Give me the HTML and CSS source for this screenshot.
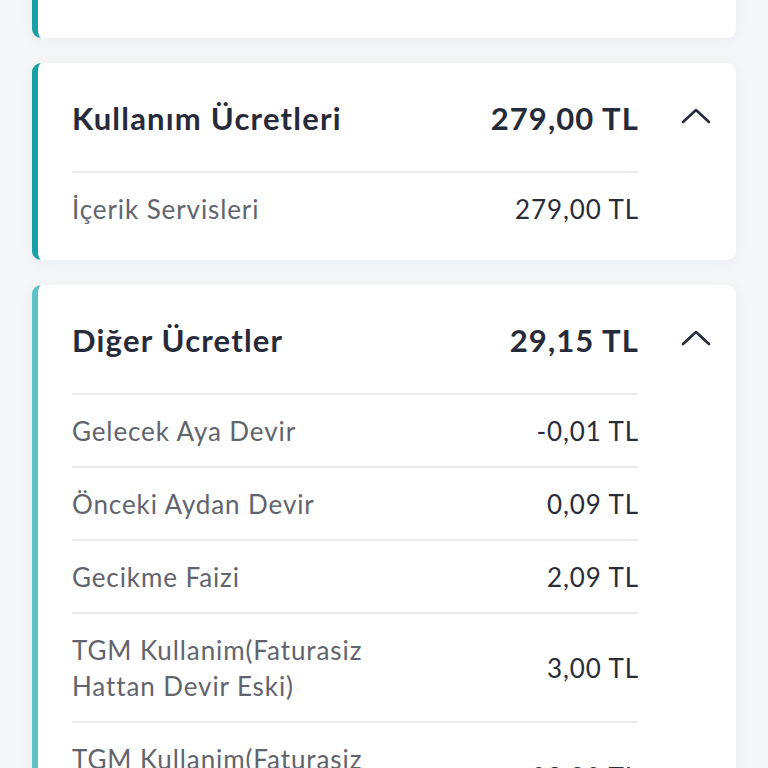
FILE: index.html
```html
<!DOCTYPE html>
<html lang="tr">
<head>
<meta charset="utf-8">
<title>Fatura Detayı</title>
<link rel="stylesheet" href="styles.css">
</head>
<body>
<main class="list">
  <section class="card card-dark card-first">
    <div class="card-head">
      <h2 class="title">Fatura Özeti</h2>
      <span class="total">308,15 TL</span>
      <span class="chev"><svg viewBox="0 0 30 16" width="30" height="16"><path d="M2 14 L15 2 L28 14" fill="none" stroke="#272a38" stroke-width="2.6" stroke-linecap="round" stroke-linejoin="round"/></svg></span>
    </div>
    <div class="rows">
      <div class="row"><span class="label">Bu Ayki Tutar</span><span class="amount">308,15 TL</span></div>
    </div>
  </section>

  <section class="card card-dark">
    <div class="card-head">
      <h2 class="title">Kullanım Ücretleri</h2>
      <span class="total">279,00 TL</span>
      <span class="chev"><svg viewBox="0 0 30 16" width="30" height="16"><path d="M2 14 L15 2 L28 14" fill="none" stroke="#272a38" stroke-width="2.6" stroke-linecap="round" stroke-linejoin="round"/></svg></span>
    </div>
    <div class="rows">
      <div class="row"><span class="label">İçerik Servisleri</span><span class="amount">279,00 TL</span></div>
    </div>
  </section>

  <section class="card card-light">
    <div class="card-head">
      <h2 class="title">Diğer Ücretler</h2>
      <span class="total">29,15 TL</span>
      <span class="chev"><svg viewBox="0 0 30 16" width="30" height="16"><path d="M2 14 L15 2 L28 14" fill="none" stroke="#272a38" stroke-width="2.6" stroke-linecap="round" stroke-linejoin="round"/></svg></span>
    </div>
    <div class="rows">
      <div class="row"><span class="label">Gelecek Aya Devir</span><span class="amount">-0,01 TL</span></div>
      <div class="row"><span class="label">Önceki Aydan Devir</span><span class="amount">0,09 TL</span></div>
      <div class="row"><span class="label">Gecikme Faizi</span><span class="amount">2,09 TL</span></div>
      <div class="row"><span class="label">TGM Kullanim(Faturasiz Hattan Devir Eski)</span><span class="amount">3,00 TL</span></div>
      <div class="row"><span class="label">TGM Kullanim(Faturasiz Hattan Devir Yeni)</span><span class="amount">23,08 TL</span></div>
    </div>
  </section>
</main>
</body>
</html>
```

FILE: styles.css
```css
* { box-sizing: border-box; }

html, body {
  margin: 0;
  padding: 0;
  background: #f5f6f8;
  overflow: hidden;
}

body {
  font-family: "Lato", "Noto Sans", sans-serif;
  color: #272a38;
}

.list {
  display: flex;
  flex-direction: column;
  gap: 25px;
  padding: 0 32px;
  margin-top: -161px;
}

.card {
  background: #ffffff;
  border-radius: 9px;
  border-left: 6px solid #1aa0a7;
  box-shadow: 0 2px 14px rgba(30, 40, 60, 0.05);
  padding: 0 0 16px 34px;
}

.card-first { padding-bottom: 18px; }

.card-dark { border-left-color: #1a9fa6; }
.card-light { border-left-color: #5cc2c6; }

.card-head {
  display: flex;
  align-items: center;
  padding: 37px 0 35px;
}

.title {
  flex: 1;
  margin: 0;
  font-size: 31px;
  line-height: 36px;
  font-weight: 700;
  letter-spacing: 1.2px;
  color: #272a38;
}

.total {
  font-size: 31px;
  line-height: 36px;
  font-weight: 700;
  letter-spacing: 1.1px;
  margin-right: -1px;
  color: #272a38;
}

.chev {
  width: 98px;
  display: flex;
  justify-content: flex-start;
  padding-left: 43px;
}

.chev svg { display: block; margin-top: -4px; }

.rows {
  margin-right: 98px;
}

.row {
  display: flex;
  align-items: center;
  justify-content: space-between;
  border-top: 2px solid #e8e9ec;
  padding: 18px 0 17px;
}

.label {
  font-size: 26px;
  line-height: 36px;
  letter-spacing: 0.9px;
  color: #61646d;
  max-width: 330px;
}

.amount {
  font-size: 26px;
  line-height: 36px;
  letter-spacing: 0.9px;
  margin-right: -1px;
  color: #2a2d39;
  white-space: nowrap;
}
```
